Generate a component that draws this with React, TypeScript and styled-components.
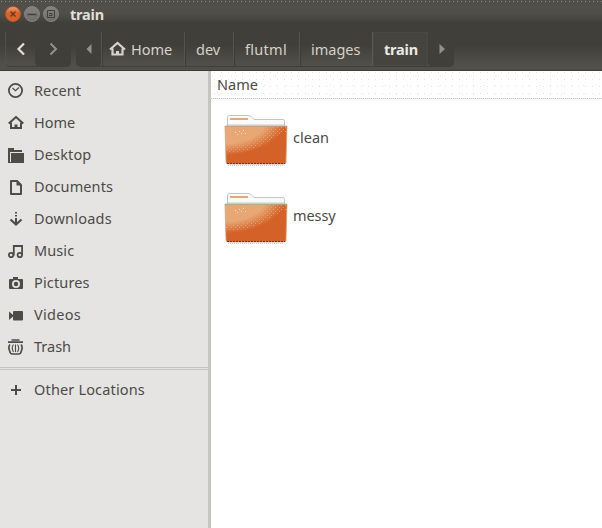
import React from "react";
import styled, { createGlobalStyle } from "styled-components";

const Global = createGlobalStyle`
  * { box-sizing: border-box; }
  body { margin: 0; background: #fff; overflow: hidden; }
`;

const Window = styled.div`
  width: 602px;
  height: 528px;
  display: flex;
  flex-direction: column;
  background: #fff;
  color: #4c4b46;
  font: 14.5px/20px "Noto Sans", sans-serif;
`;

const Header = styled.header`
  height: 71px;
  flex: none;
  border-bottom: 1px solid #3c3b37;
  background:
    repeating-linear-gradient(90deg, transparent 0 1px, #8b8a84 1px 2px, transparent 2px 4px) 0 1px / 100% 1px no-repeat,
    linear-gradient(#504f49 0 13px, #403f3a 23px 45px, #504f49 64px);
`;

const TitleBar = styled.div`
  height: 29px;
  display: flex;
  align-items: center;
  gap: 3px;
  padding-left: 5px;
`;

const WindowButton = styled.span<{ $close?: boolean }>`
  width: 16px;
  height: 16px;
  margin-bottom: 1px;
  border-radius: 50%;
  border: 1px solid ${(p) => (p.$close ? "#b9582c" : "#85847e")};
  background: ${(p) => (p.$close ? "linear-gradient(#ef9c6c, #d9622b 45%, #d9622b)" : "linear-gradient(#858480, #6f6e69)")};
  svg { display: block; }
`;

const Label = styled.span<{ $track?: number; $bold?: boolean }>`
  white-space: nowrap;
  letter-spacing: ${(p) => p.$track ?? 0}px;
  font-weight: ${(p) => (p.$bold ? 700 : 400)};
`;

const Title = styled(Label)`
  margin: 0 0 1px 8px;
  color: #e2dfd6;
`;

const Toolbar = styled.div`
  height: 38px;
  padding: 3px 0 0 5px;
  display: flex;
  gap: 5px;
`;

const ButtonGroup = styled.div`
  height: 35px;
  display: flex;
  border-bottom: 1px solid #403f3a;
  border-radius: 0 0 5px 5px;
`;

const NavButton = styled.button<{ $w: number; $inactive?: boolean; $edge?: boolean }>`
  width: ${(p) => p.$w}px;
  padding: 0;
  border: 0;
  border-left: ${(p) => (p.$edge ? "1px solid #50504a" : "0")};
  border-radius: 0 0 4px 4px;
  background: ${(p) => (p.$inactive ? "#403f3a" : "transparent")};
  color: ${(p) => (p.$inactive ? "#92918b" : "#e2dfd6")};
  display: flex;
  align-items: center;
  justify-content: center;
  svg { display: block; }
`;

const Crumb = styled.button<{ $w: number; $current?: boolean }>`
  width: ${(p) => p.$w}px;
  padding: 0 0 1px 11px;
  border: 0;
  border-left: 1px solid ${(p) => (p.$current ? "#5b5a54" : "#55544e")};
  box-shadow: ${(p) => (p.$current ? "inset 0 0 2px #57564f" : "inset 1px 0 #3d3c38")};
  background: ${(p) => (p.$current ? "#45443f" : "transparent")};
  color: ${(p) => (p.$current ? "#eceae3" : "#d5d2c9")};
  font: inherit;
  display: flex;
  align-items: center;
  gap: 5px;
  svg { margin-left: -4px; flex: none; }
`;

const Body = styled.div`
  flex: 1;
  display: flex;
`;

const Sidebar = styled.nav`
  width: 211px;
  flex: none;
  padding-top: 4px;
  border-right: 3px solid #c5c5c0;
  background: #e5e4e2;
`;

const Place = styled.div`
  height: 32px;
  display: flex;
  align-items: center;
  gap: 10px;
  padding-left: 8px;
  svg { flex: none; color: #4d4c46; }
  ${Label} { padding-bottom: 2px; }
`;

const Divider = styled.div`
  height: 3px;
  margin: 4px 0;
  border: solid #c5c5c0;
  border-width: 1px 0;
`;

const Files = styled.main`
  flex: 1;
`;

const ColumnHeader = styled.div`
  height: 28px;
  padding: 3px 0 0 6px;
  background:
    repeating-linear-gradient(90deg, #c6c6c2 0 1px, #ededeb 1px 2px) 0 100% / 100% 1px no-repeat,
    radial-gradient(circle, #e2e2e0 0 0.5px, transparent 0.7px) 0 5px / 7px 7px,
    radial-gradient(circle, #eaeae8 0 0.5px, transparent 0.7px) 4px 1px / 11px 9px,
    #fff;
`;

const FileList = styled.div`
  margin-top: -1px;
`;

const FileRow = styled.div`
  height: 78px;
  padding-left: 12px;
  display: flex;
  align-items: center;
  gap: 4px;
`;

const FolderArt = styled.svg`
  flex: none;
  width: 66px;
  height: 54px;
  margin-top: 6px;
`;

const stroke = { fill: "none", stroke: "currentColor", strokeWidth: 2 };

const HouseIcon = () => (
  <svg width="17" height="16" viewBox="0 0 17 16">
    <path d="M1 8.5 8.5 2 16 8.5M3.5 7.5v6H13.5v-6" {...stroke} strokeWidth={2.2} />
    <path d="M7 14v-4h3v4z" fill="currentColor" />
  </svg>
);

const icons: Record<string, React.ReactNode> = {
  Recent: (
    <>
      <circle cx="7.5" cy="7.5" r="6.6" {...stroke} strokeWidth={1.8} />
      <path d="m4.5 5 3 2.8L11 4.5" {...stroke} strokeWidth={1.2} />
    </>
  ),
  Home: (
    <>
      <path d="M.7 8.5 8 2l7.3 6.5M3 7.5V13h10V7.5" {...stroke} />
      <path d="M6.5 13.5v-4h3v4z" fill="currentColor" />
    </>
  ),
  Desktop: (
    <>
      <path d="M0 1h6v2h8v2H2v11H0z" fill="currentColor" />
      <path d="M3 6h13v10H2V7h1z" fill="currentColor" />
      <path d="M2.5 16V5.5H14" fill="none" stroke="#e5e4e2" />
      <path d="M0 15h3v1H0z" fill="currentColor" />
    </>
  ),
  Documents: (
    <>
      <path d="M3 2h6l4 4v9H3z" {...stroke} strokeLinejoin="round" />
      <path d="M8.5 1v5.5H14z" fill="currentColor" />
    </>
  ),
  Downloads: (
    <>
      <path d="M8 1v1.5M8 4v1.5M8 7v6" {...stroke} />
      <path d="m2.5 8.5 5.5 5 5.5-5" {...stroke} strokeWidth={2.2} />
    </>
  ),
  Music: (
    <>
      <circle cx="3.1" cy="12" r="2.2" {...stroke} strokeWidth={1.8} />
      <circle cx="11.8" cy="12" r="2.2" {...stroke} strokeWidth={1.8} />
      <path d="M5.8 12.5V3h8.3v9.5" {...stroke} strokeWidth={1.8} />
    </>
  ),
  Pictures: (
    <>
      <path
        fillRule="evenodd"
        d="M5 2h5v2h4q1 0 1 1v8q0 1-1 1H2q-1 0-1-1V5q0-1 1-1h3zM8 5a4 4 0 1 0 0 8 4 4 0 0 0 0-8"
        fill="currentColor"
      />
      <circle cx="8" cy="9" r="2.2" fill="currentColor" />
    </>
  ),
  Videos: (
    <>
      <path d="M1 4.5 5 8v1.5L1 13z" fill="currentColor" />
      <rect x="5" y="4" width="10" height="9.5" rx="1" fill="currentColor" />
    </>
  ),
  Trash: (
    <>
      <path d="M3.5 1h8M0 3.2h15" {...stroke} strokeWidth={1.7} />
      <path d="M2 5.5Q0 8 1.500 11.500 2 15 4.500 15h6q2.500 0 3-3.500Q15 8 13 5.500" {...stroke} strokeWidth={1.7} />
      <path d="M5.500 5.500q-2.500 3.500 0 7.500M7.500 5.500V13M9.500 5.500q2.500 3.500 0 7.500" {...stroke} strokeWidth={1.1} />
    </>
  ),
  "Other Locations": <path d="M8 3v10M3 8h10" {...stroke} />,
};

const places: [string, number][] = [
  ["Recent", 0.1],
  ["Home", 0],
  ["Desktop", 0.15],
  ["Documents", 0.1],
  ["Downloads", 0.22],
  ["Music", 0.1],
  ["Pictures", 0.15],
  ["Videos", 0.3],
  ["Trash", 0],
];

const PlaceRow = ({ name, track }: { name: string; track: number }) => (
  <Place>
    <svg width="16" height="16" viewBox="0 0 16 16">{icons[name]}</svg>
    <Label $track={track}>{name}</Label>
  </Place>
);

const Folder = ({ id }: { id: string }) => (
  <FolderArt viewBox="0 0 66 54">
    <defs>
      <radialGradient id={`${id}-glow`} gradientUnits="userSpaceOnUse" cx="0" cy="0" r="1" gradientTransform="translate(6 10) rotate(-6) scale(60 33)">
        <stop offset="0.62" stopColor="#e8a875" />
        <stop offset="0.98" stopColor="#d46128" />
      </radialGradient>
      <pattern id={`${id}-sparse`} width="4" height="4" patternUnits="userSpaceOnUse">
        <path d="M0 0h1v1H0zM2 2h1v1H2z" fill="#e8a875" />
      </pattern>
    </defs>
    <path d="M4.5 14V4.5q0-2 2-2H25q3 0 4 2l2 2h29q1.5 0 1.5 2V14" fill="#fafafa" stroke="#c4c4c1" />
    <path d="M7 5h18v2H7z" fill="#e8a875" />
    <path d="M5 11h56v3H5z" fill="#e1e1df" />
    <path d="M2 13h62l-1 36q0 2-2 2H5q-2 0-2-2z" fill={`url(#${id}-glow)`} stroke="#dda27a" strokeWidth=".8" />
    <path d="M40 14h23v5L51 24 40 32l-16 6-21 2v-7l20-2 10-4z" fill={`url(#${id}-sparse)`} opacity=".8" />
    <path d="M12 19h1v1h-1zM16 18h1v1h-1zM20 17h1v1h-1zM18 20h1v1h-1zM14 21h1v1h-1zM22 20h1v1h-1z" fill="#f1dccb" />
    <path d="M2 13.5h62" stroke="#aaa29b" strokeDasharray="2 1" />
    <path d="M4 50.5h58" stroke="#623c2a" strokeDasharray="2 1" />
    <path d="M5 52.5h56" stroke="#cfcecb" strokeDasharray="1 1" />
  </FolderArt>
);

export default function App() {
  return (
    <Window>
      <Global />
      <Header>
        <TitleBar>
          <WindowButton $close>
            <svg width="14" height="14"><path d="m4.5 4.5 5 5m0-5-5 5" stroke="#5c3826" strokeWidth="1.3" /></svg>
          </WindowButton>
          <WindowButton>
            <svg width="14" height="14"><path d="M2.5 7.5h9" stroke="#42413c" strokeWidth="1.5" /></svg>
          </WindowButton>
          <WindowButton>
            <svg width="14" height="14"><path d="M3.5 3.5h7v7h-7zM5 6.5h3v2H5" fill="none" stroke="#42413c" /></svg>
          </WindowButton>
          <Title $bold $track={-0.2}>train</Title>
        </TitleBar>
        <Toolbar>
          <ButtonGroup>
            <NavButton $w={30} $edge aria-label="Back">
              <svg width="10" height="14"><path d="M8 1.5 2.5 7 8 12.5" {...stroke} strokeWidth={2.2} /></svg>
            </NavButton>
            <NavButton $w={36} $inactive aria-label="Forward">
              <svg width="10" height="14"><path d="M2.5 1.5 8 7l-5.5 5.5" {...stroke} /></svg>
            </NavButton>
          </ButtonGroup>
          <ButtonGroup>
            <NavButton $w={25} $inactive aria-label="Earlier folders">
              <svg width="6" height="10"><path d="M5.5 0v10L.5 5z" fill="currentColor" /></svg>
            </NavButton>
            <Crumb $w={83}><HouseIcon /><Label>Home</Label></Crumb>
            <Crumb $w={49}><Label>dev</Label></Crumb>
            <Crumb $w={66}><Label $track={0.3}>flutml</Label></Crumb>
            <Crumb $w={73}><Label>images</Label></Crumb>
            <Crumb $w={56} $current><Label $bold $track={-0.2}>train</Label></Crumb>
            <NavButton $w={26} $inactive aria-label="Later folders">
              <svg width="8" height="10"><path d="M2.5 0v10L8 5z" fill="currentColor" /></svg>
            </NavButton>
          </ButtonGroup>
        </Toolbar>
      </Header>
      <Body>
        <Sidebar>
          {places.map(([name, track]) => <PlaceRow key={name} name={name} track={track} />)}
          <Divider />
          <PlaceRow name="Other Locations" track={0.16} />
        </Sidebar>
        <Files>
          <ColumnHeader><Label>Name</Label></ColumnHeader>
          <FileList>
            <FileRow><Folder id="clean" /><Label>clean</Label></FileRow>
            <FileRow><Folder id="messy" /><Label $track={-0.1}>messy</Label></FileRow>
          </FileList>
        </Files>
      </Body>
    </Window>
  );
}
